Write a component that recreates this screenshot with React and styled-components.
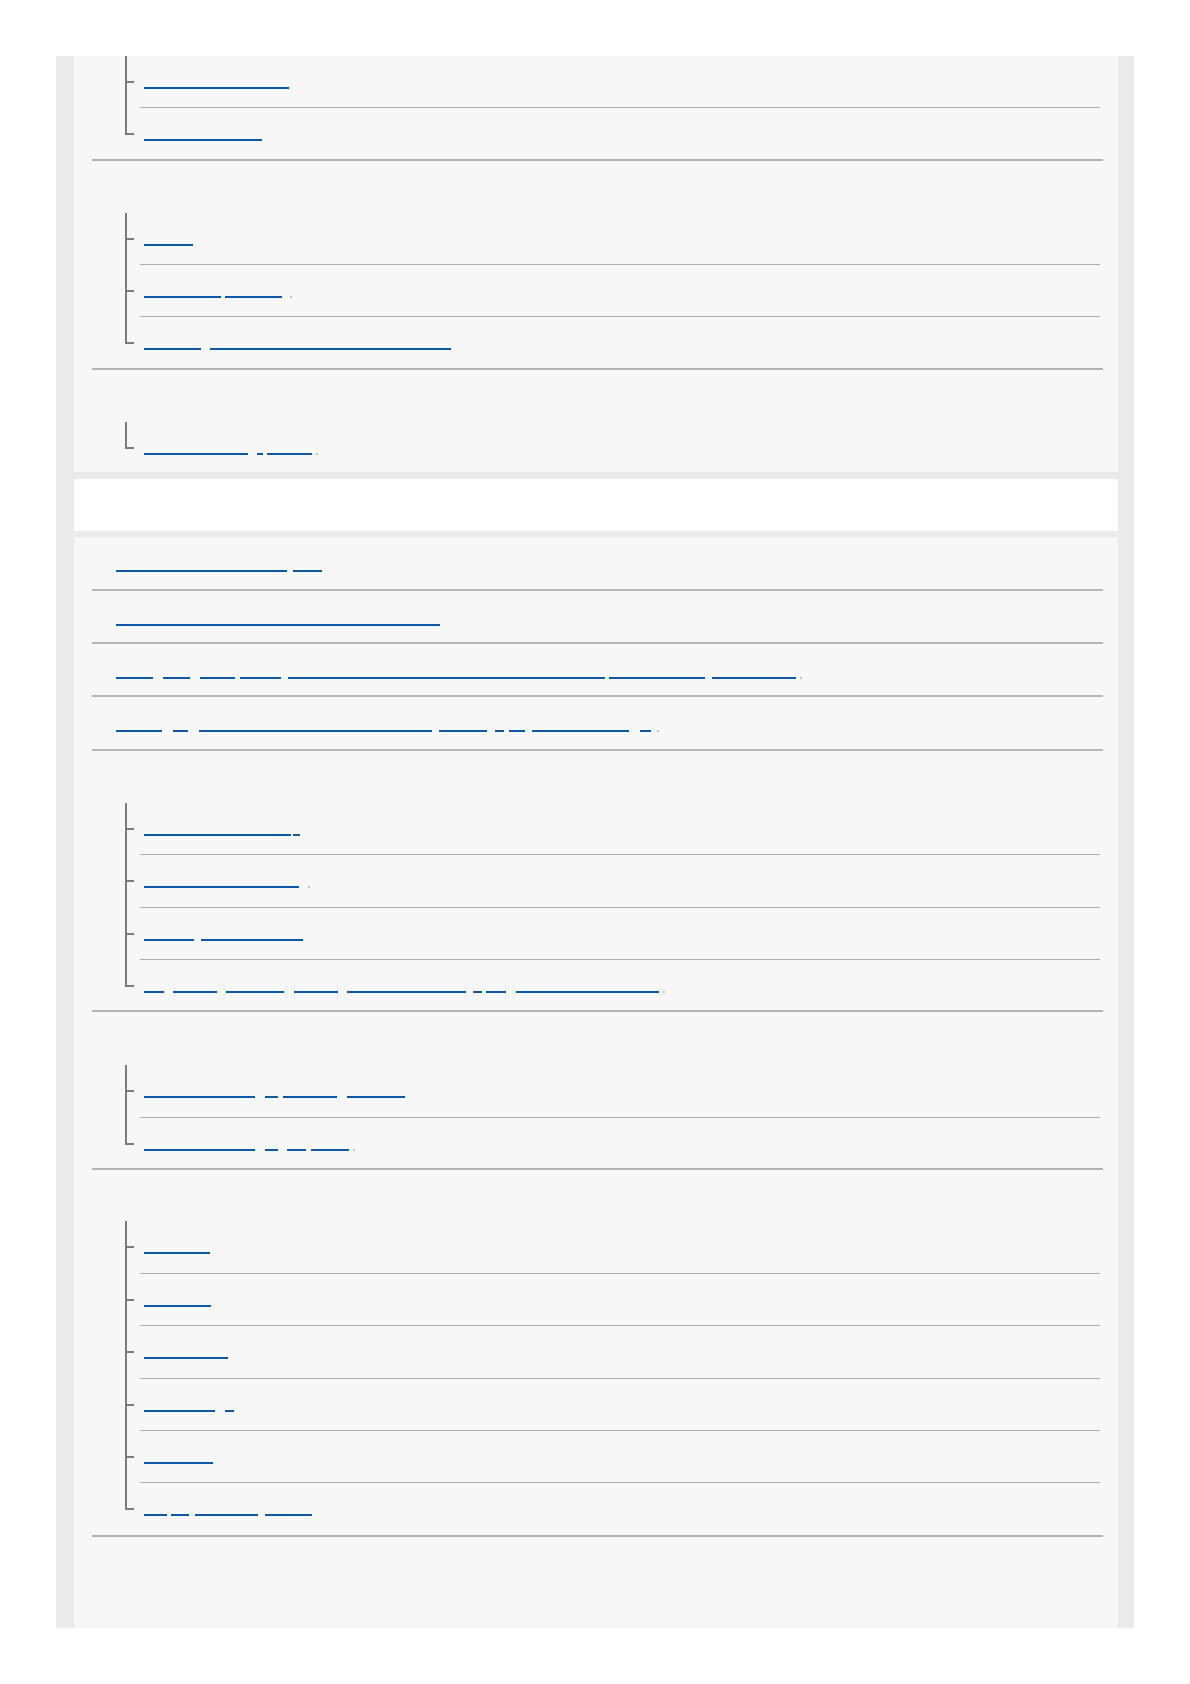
import styled, { createGlobalStyle } from "styled-components";

const GlobalStyle = createGlobalStyle`
  html, body {
    margin: 0;
    padding: 0;
    background: #fff;
  }
  body {
    font-family: "Liberation Sans", Arial, sans-serif;
  }
`;

const Page = styled.div`
  width: 1078px;
  margin: 56px 0 0 56px;
  padding: 0 16px 0 18px;
  box-sizing: border-box;
  background: #eaeaea;
`;

const Panel = styled.div`
  height: ${(p) => p.$h}px;
  padding: 0 15px 0 18px;
  box-sizing: border-box;
  background: #f7f7f7;
`;

const TitleBar = styled.div`
  height: 52px;
  margin: 7px 0 6px;
  background: #fff;
`;

const Section = styled.div`
  border-bottom: ${(p) => (p.$border ? "2px solid #b3b3b3" : "none")};
`;

const Heading = styled.div`
  height: ${(p) => p.$h}px;
`;

const TopRow = styled.div`
  height: ${(p) => p.$h}px;
  padding: 33px 0 0 24px;
  box-sizing: border-box;
  border-bottom: 2px solid #b6b6b6;
`;

const Tree = styled.div`
  padding-left: 33px;
  margin-right: 3px;
`;

const TreeRow = styled.div`
  display: flex;
  height: ${(p) => p.$h}px;
`;

const Bracket = styled.div`
  position: relative;
  flex: none;
  width: 15px;

  &::before {
    content: "";
    position: absolute;
    left: 0;
    top: 0;
    width: 2px;
    height: ${(p) => (p.$last ? "27px" : "100%")};
    background: #7b7b7b;
  }

  &::after {
    content: "";
    position: absolute;
    left: 2px;
    top: 25px;
    width: 7px;
    height: 2px;
    background: #7b7b7b;
  }
`;

const Item = styled.div`
  flex: 1;
  padding: 31px 0 0 4px;
  box-sizing: border-box;
  border-bottom: ${(p) => (p.$last ? "none" : "1px solid #acacac")};
`;

const Link = styled.a`
  display: flex;
  align-items: flex-start;
  height: 2px;
  text-decoration: none;
`;

const Seg = styled.span`
  display: block;
  flex: none;
  height: 2px;
  background: #0d58a4;
`;

const Dot = styled.span`
  display: block;
  flex: none;
  width: 2px;
  height: 2px;
  background: #b9c2cc;
`;

// underline runs of each link, as absolute [start, end] x on the page
const panelOne = [
  {
    head: 0,
    border: true,
    rows: [
      { h: 52, segs: [[144, 289]] },
      { h: 51, segs: [[144, 262]] },
    ],
  },
  {
    head: 52,
    border: true,
    rows: [
      { h: 52, segs: [[144, 193]] },
      { h: 52, segs: [[144, 221], [225, 282]], dot: 290 },
      { h: 51, segs: [[144, 201], [210, 451]] },
    ],
  },
  {
    head: 52,
    border: false,
    rows: [{ h: 50, segs: [[144, 248], [257, 263], [267, 312]], dot: 316 }],
  },
];

const topLinks = [
  { h: 54, segs: [[116, 287], [293, 322]] },
  { h: 53, segs: [[116, 440]] },
  {
    h: 53,
    segs: [[116, 153], [163, 190], [200, 235], [240, 281], [288, 605], [609, 705], [712, 796]],
    dot: 800,
  },
  {
    h: 54,
    segs: [[116, 162], [173, 188], [199, 432], [439, 487], [495, 504], [509, 525], [532, 629], [640, 651]],
    dot: 657,
  },
];

const panelTwo = [
  {
    head: 52,
    border: true,
    rows: [
      { h: 52, segs: [[144, 291], [293, 300]] },
      { h: 53, segs: [[144, 299]], dot: 308 },
      { h: 52, segs: [[144, 194], [201, 303]] },
      {
        h: 50,
        segs: [[144, 164], [173, 217], [226, 284], [294, 338], [347, 466], [473, 482], [486, 506], [516, 659]],
        dot: 663,
      },
    ],
  },
  {
    head: 53,
    border: true,
    rows: [
      { h: 53, segs: [[144, 255], [265, 278], [283, 337], [347, 405]] },
      { h: 50, segs: [[144, 255], [265, 278], [287, 306], [311, 349]], dot: 353 },
    ],
  },
  {
    head: 51,
    border: true,
    rows: [
      { h: 53, segs: [[144, 210]] },
      { h: 52, segs: [[144, 211]] },
      { h: 53, segs: [[144, 228]] },
      { h: 52, segs: [[144, 215], [225, 234]] },
      { h: 52, segs: [[144, 213]] },
      { h: 52, segs: [[144, 167], [171, 189], [195, 258], [265, 312]] },
    ],
  },
];

const Underline = ({ segs, dot, from }) => {
  let x = from;
  return (
    <Link href="#">
      {segs.map(([a, b], i) => {
        const gap = a - x;
        x = b;
        return <Seg key={i} style={{ width: b - a, marginLeft: gap }} />;
      })}
      {dot && <Dot style={{ marginLeft: dot - x }} />}
    </Link>
  );
};

const Group = ({ group }) => (
  <Section $border={group.border}>
    {group.head > 0 && <Heading $h={group.head} />}
    <Tree>
      {group.rows.map((row, i) => {
        const last = i === group.rows.length - 1;
        return (
          <TreeRow key={i} $h={row.h}>
            <Bracket $last={last} />
            <Item $last={last}>
              <Underline segs={row.segs} dot={row.dot} from={144} />
            </Item>
          </TreeRow>
        );
      })}
    </Tree>
  </Section>
);

const App = () => (
  <>
    <GlobalStyle />
    <Page>
      <Panel $h={416}>
        {panelOne.map((g, i) => (
          <Group key={i} group={g} />
        ))}
      </Panel>
      <TitleBar />
      <Panel $h={1091}>
        <Section>
          {topLinks.map((row, i) => (
            <TopRow key={i} $h={row.h}>
              <Underline segs={row.segs} dot={row.dot} from={116} />
            </TopRow>
          ))}
        </Section>
        {panelTwo.map((g, i) => (
          <Group key={i} group={g} />
        ))}
      </Panel>
    </Page>
  </>
);

export default App;
